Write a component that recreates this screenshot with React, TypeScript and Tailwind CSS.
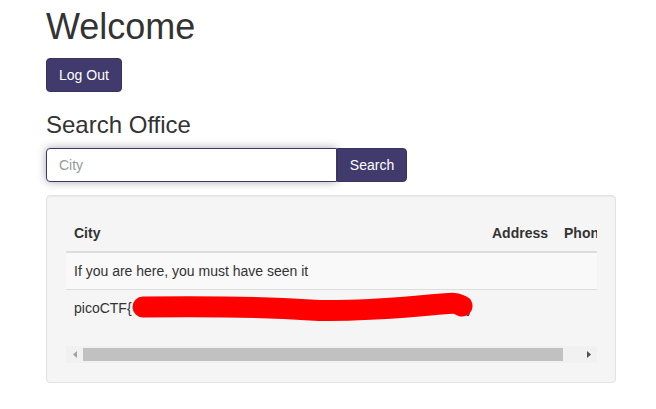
import React from "react"

const rows = [
  { city: "If you are here, you must have seen it", address: "", phone: "" },
]

const Scribble = () => (
  <svg
    className="absolute left-0 top-0 pointer-events-none"
    width="420"
    height="37"
    viewBox="0 0 420 37"
  >
    <path
      d="M77 17 C 154 16, 214 18, 244 20 S 334 18, 364 15 S 389 13, 396 16"
      fill="none"
      stroke="#ff0000"
      strokeWidth="21"
      strokeLinecap="round"
      strokeLinejoin="round"
    />
  </svg>
)

const FakeScrollbar = () => (
  <div className="flex h-[17px] w-[531px] items-center bg-[#f1f1f1]">
    <div className="flex h-[17px] w-[17px] items-center justify-center">
      <svg width="4" height="7" viewBox="0 0 4 7">
        <polygon points="4,0 0,3.5 4,7" fill="#a3a3a3" />
      </svg>
    </div>
    <div className="h-[13px] w-[480px] bg-[#c1c1c1]" />
    <div className="flex-1" />
    <div className="flex h-[17px] w-[17px] items-center justify-center">
      <svg width="4" height="7" viewBox="0 0 4 7">
        <polygon points="0,0 4,3.5 0,7" fill="#505050" />
      </svg>
    </div>
  </div>
)

export default function App() {
  return (
    <div className="min-h-screen bg-white font-['Liberation_Sans',Arial,sans-serif] text-[14px] leading-[20px] text-[#333]">
      <div className="pl-[46px] pt-[7px]">
        <h1 className="text-[36px] leading-[40px]">Welcome</h1>
        <button className="mt-[11px] h-[34px] rounded-[4px] border border-[#3a335f] bg-[#413a6c] px-[12px] text-white">
          Log Out
        </button>
        <h2 className="mt-[20px] text-[24px] leading-[26px]">Search Office</h2>
        <div className="mt-[10px] flex">
          <input
            placeholder="City"
            className="h-[34px] w-[291px] rounded-l-[4px] border border-[#3d3766] bg-white px-[12px] text-[14px] text-[#555] shadow-[0_0_8px_rgba(60,60,80,0.45)] outline-none placeholder:text-[#999]"
          />
          <button className="h-[34px] w-[70px] rounded-r-[4px] border border-[#3a335f] bg-[#413a6c] text-white">
            Search
          </button>
        </div>
        <div className="mt-[13px] w-[570px] rounded-[4px] border border-[#e3e3e3] bg-[#f5f5f5] px-[19px] pb-[19px] pt-[19px] shadow-[inset_0_1px_1px_rgba(0,0,0,0.05)]">
          <div className="w-[531px] overflow-hidden">
            <table className="w-[549px] border-collapse">
              <thead>
                <tr>
                  <th className="border-b-2 border-[#ddd] p-[8px] text-left font-bold">City</th>
                  <th className="w-[72px] border-b-2 border-[#ddd] p-[8px] text-left font-bold">Address</th>
                  <th className="w-[59px] border-b-2 border-[#ddd] p-[8px] text-left font-bold">Phone</th>
                </tr>
              </thead>
              <tbody>
                {rows.map((r) => (
                  <tr key={r.city} className="bg-[#f9f9f9]">
                    <td className="border-t border-[#ddd] p-[8px] whitespace-nowrap">{r.city}</td>
                    <td className="border-t border-[#ddd] p-[8px]">{r.address}</td>
                    <td className="border-t border-[#ddd] p-[8px]">{r.phone}</td>
                  </tr>
                ))}
                <tr>
                  <td className="relative border-t border-[#ddd] p-[8px] whitespace-nowrap">
                    picoCTF{"{"}
                    <span className="inline-block w-[335px]" />
                    {"}"}
                    <Scribble />
                  </td>
                  <td className="border-t border-[#ddd] p-[8px]"></td>
                  <td className="border-t border-[#ddd] p-[8px]"></td>
                </tr>
              </tbody>
            </table>
          </div>
          <div className="mt-[20px]">
            <FakeScrollbar />
          </div>
        </div>
      </div>
    </div>
  )
}
